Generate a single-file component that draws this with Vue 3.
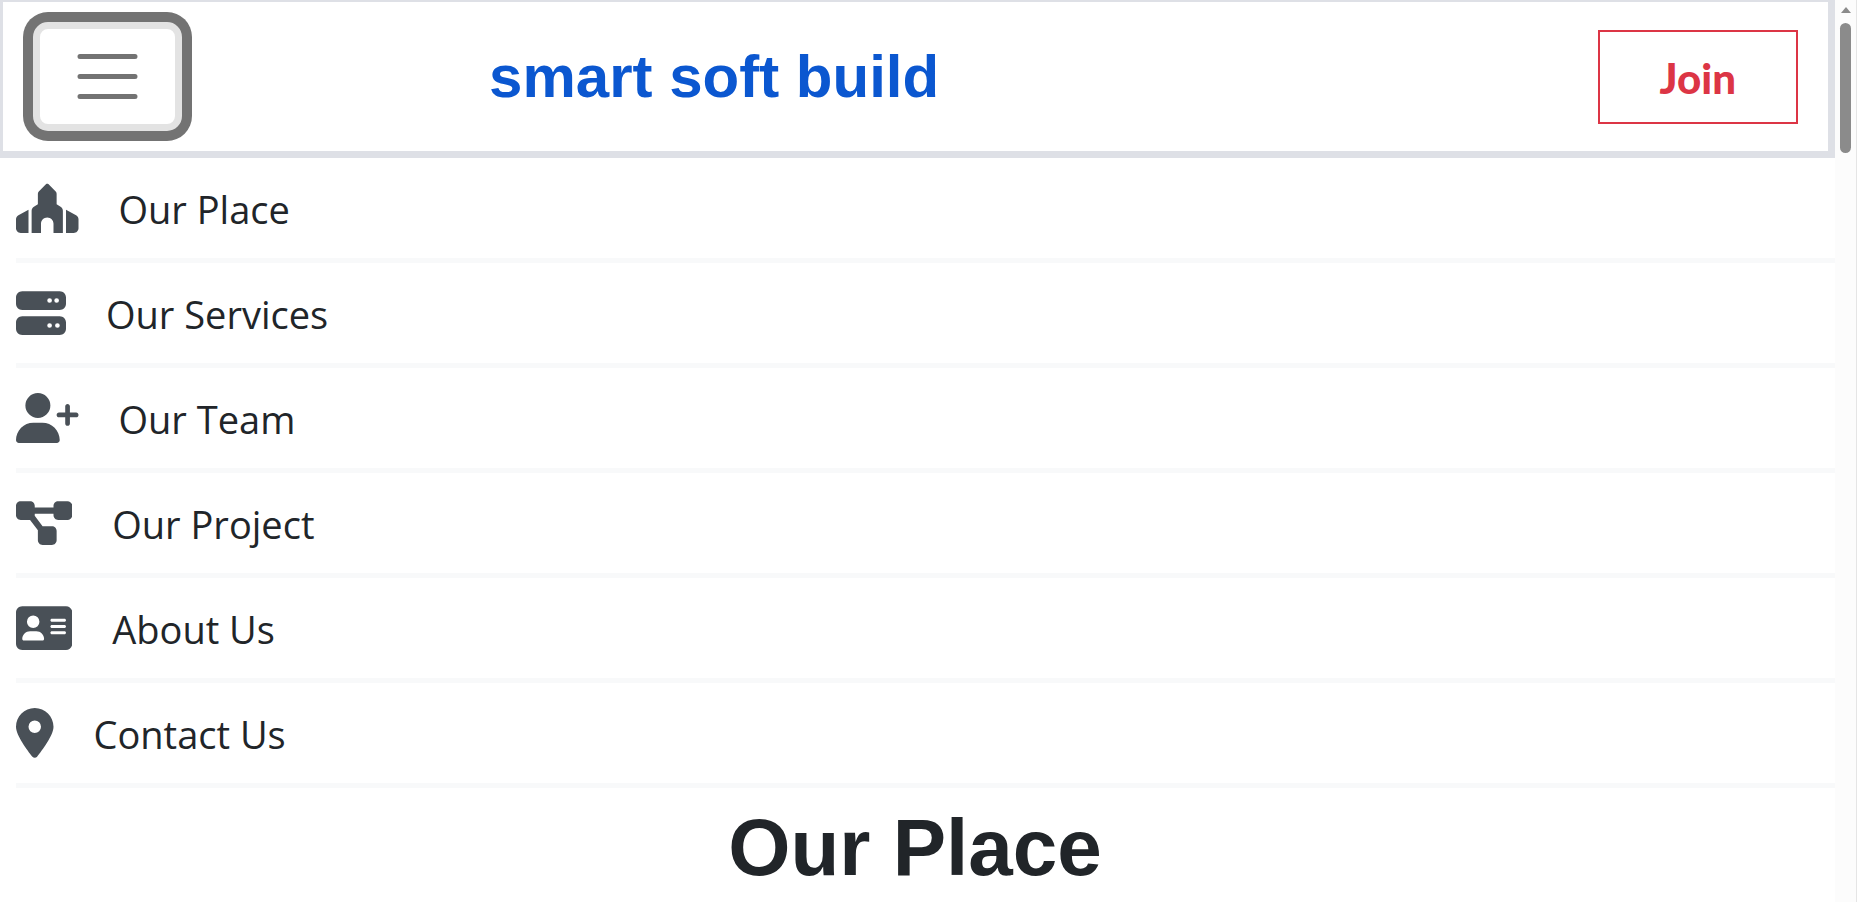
<script setup>
const items = [
  {
    label: 'Our Place',
    width: 640,
    path: 'M224 109.3V217.6L183.3 242c-14.5 8.7-23.3 24.3-23.3 41.2V512h96V416c0-35.3 28.7-64 64-64s64 28.7 64 64v96h96V283.2c0-16.9-8.8-32.5-23.3-41.2L416 217.6V109.3c0-8.5-3.4-16.6-9.4-22.6L331.3 11.3c-6.2-6.2-16.4-6.2-22.6 0L233.4 86.6c-6 6-9.4 14.1-9.4 22.6zM24.9 330.3C9.5 338.8 0 354.9 0 372.4V464c0 26.5 21.5 48 48 48h80V273.6L24.9 330.3zM592 512c26.5 0 48-21.5 48-48V372.4c0-17.5-9.5-33.6-24.9-42.1L512 273.6V512h80z',
  },
  {
    label: 'Our Services',
    width: 512,
    path: 'M64 32C28.7 32 0 60.7 0 96v64c0 35.3 28.7 64 64 64H448c35.3 0 64-28.7 64-64V96c0-35.3-28.7-64-64-64H64zm280 72a24 24 0 1 1 0 48 24 24 0 1 1 0-48zm48 24a24 24 0 1 1 48 0 24 24 0 1 1 -48 0zM64 288c-35.3 0-64 28.7-64 64v64c0 35.3 28.7 64 64 64H448c35.3 0 64-28.7 64-64V352c0-35.3-28.7-64-64-64H64zm280 72a24 24 0 1 1 0 48 24 24 0 1 1 0-48zm56 24a24 24 0 1 1 48 0 24 24 0 1 1 -48 0z',
  },
  {
    label: 'Our Team',
    width: 640,
    path: 'M96 128a128 128 0 1 1 256 0A128 128 0 1 1 96 128zM0 482.3C0 383.8 79.8 304 178.3 304h91.4C368.2 304 448 383.8 448 482.3c0 16.4-13.3 29.7-29.7 29.7H29.7C13.3 512 0 498.7 0 482.3zM504 312V248H440c-13.3 0-24-10.7-24-24s10.7-24 24-24h64V136c0-13.3 10.7-24 24-24s24 10.7 24 24v64h64c13.3 0 24 10.7 24 24s-10.7 24-24 24H552v64c0 13.3-10.7 24-24 24s-24-10.7-24-24z',
  },
  {
    label: 'Our Project',
    width: 576,
    path: 'M0 80C0 53.5 21.5 32 48 32h96c26.5 0 48 21.5 48 48V96H384V80c0-26.5 21.5-48 48-48h96c26.5 0 48 21.5 48 48v96c0 26.5-21.5 48-48 48H432c-26.5 0-48-21.5-48-48V160H192v16c0 1.7-.1 3.4-.3 5L272 288h96c26.5 0 48 21.5 48 48v96c0 26.5-21.5 48-48 48H272c-26.5 0-48-21.5-48-48V336c0-1.7 .1-3.4 .3-5L144 224H48c-26.5 0-48-21.5-48-48V80z',
  },
  {
    label: 'About Us',
    width: 576,
    path: 'M64 32C28.7 32 0 60.7 0 96V416c0 35.3 28.7 64 64 64H512c35.3 0 64-28.7 64-64V96c0-35.3-28.7-64-64-64H64zm80 256h64c44.2 0 80 35.8 80 80c0 8.8-7.2 16-16 16H80c-8.8 0-16-7.2-16-16c0-44.2 35.8-80 80-80zm-32-96a64 64 0 1 1 128 0 64 64 0 1 1 -128 0zm256-32H496c8.8 0 16 7.2 16 16s-7.2 16-16 16H368c-8.8 0-16-7.2-16-16s7.2-16 16-16zm0 64H496c8.8 0 16 7.2 16 16s-7.2 16-16 16H368c-8.8 0-16-7.2-16-16s7.2-16 16-16zm0 64H496c8.8 0 16 7.2 16 16s-7.2 16-16 16H368c-8.8 0-16-7.2-16-16s7.2-16 16-16z',
  },
  {
    label: 'Contact Us',
    width: 384,
    path: 'M215.7 499.2C267 435 384 279.4 384 192C384 86 298 0 192 0S0 86 0 192c0 87.4 117 243 168.3 307.2c12.3 15.3 35.1 15.3 47.4 0zM192 128a64 64 0 1 1 0 128 64 64 0 1 1 0-128z',
  },
]
</script>

<template>
  <div class="window">
    <div class="page">
      <header class="navbar">
        <button class="toggler" type="button" aria-label="Toggle navigation" aria-expanded="true">
          <svg class="bars" viewBox="0 0 30 30" aria-hidden="true">
            <path d="M4 7h22M4 15h22M4 23h22" />
          </svg>
        </button>
        <a class="brand" href="#">smart soft build</a>
        <button class="join" type="button">Join</button>
      </header>
      <nav class="menu">
        <a v-for="item in items" :key="item.label" class="item" href="#">
          <svg class="icon" :viewBox="`0 0 ${item.width} 512`" aria-hidden="true">
            <path :d="item.path" />
          </svg>
          <span class="label">{{ item.label }}</span>
        </a>
      </nav>
      <main class="content">
        <h1>Our Place</h1>
      </main>
    </div>
    <div class="scrollbar" aria-hidden="true">
      <svg class="arrow" viewBox="0 0 10 6"><path d="M5 0L10 6H0z" /></svg>
      <div class="thumb"></div>
    </div>
  </div>
</template>

<style>
body {
  background: #fff;
}
</style>

<style scoped>
.window {
  display: flex;
  height: 100vh;
  overflow: hidden;
  font-family: "Open Sans", "Noto Sans", sans-serif;
  color: #212529;
}
.page {
  flex: 1;
  min-width: 0;
}
.navbar {
  display: flex;
  align-items: center;
  padding: 20px 30px;
  border: 7px solid #dee0e6;
  border-width: 2px 7px 7px 3px;
}
.toggler {
  display: flex;
  padding: 10px 30px;
  border: 7px solid #e3e3e3;
  border-radius: 15px;
  background: #fff;
  box-shadow: 0 0 0 10px #737373;
}
.bars {
  width: 75px;
  height: 75px;
  fill: none;
  stroke: #737373;
  stroke-width: 2;
  stroke-linecap: round;
}
.brand {
  margin-left: 17.4%;
  font: bold 60px/90px "Liberation Sans", Arial, sans-serif;
  color: #0b57d0;
  text-decoration: none;
}
.join {
  margin-left: auto;
  padding: 16px 60px 14px;
  border: 2px solid #dc3545;
  background: #fff;
  color: #dc3545;
  font: 900 42px/60px Lato, "Noto Sans", sans-serif;
}
.menu {
  padding-left: 16px;
}
.item {
  display: flex;
  align-items: center;
  gap: 40px;
  height: 100px;
  border-bottom: 5px solid #f8f9fa;
  font-size: 38px;
  line-height: 60px;
  color: inherit;
  text-decoration: none;
}
.label {
  padding-top: 2px;
}
.icon {
  height: 50px;
  fill: #495057;
}
.content {
  padding-right: 5px;
}
h1 {
  margin: 12px 0;
  font: bold 80px/96px "Liberation Sans", Arial, sans-serif;
  text-align: center;
}
.scrollbar {
  display: flex;
  flex-direction: column;
  align-items: center;
  gap: 10px;
  width: 21px;
  padding-top: 7px;
  margin-right: 3px;
  border-right: 1px solid #e5e5e5;
  background: #fcfcfc;
}
.arrow {
  width: 10px;
  height: 6px;
  fill: #8b8b8b;
}
.thumb {
  width: 11px;
  height: 130px;
  border-radius: 6px;
  background: #8b8b8b;
}
</style>
